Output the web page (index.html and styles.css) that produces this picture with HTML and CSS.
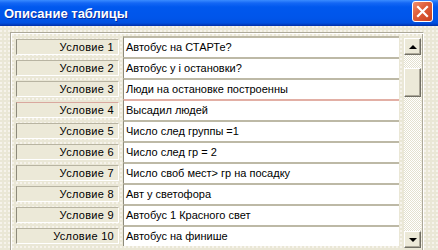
FILE: index.html
```html
<!DOCTYPE html>
<html>
<head>
<meta charset="utf-8">
<link rel="stylesheet" href="styles.css">
</head>
<body>
<div class="window">
  <div class="titlebar">
    <span class="title">Описание таблицы</span>
    <span class="close">
      <svg width="13" height="13" viewBox="0 0 13 13"><path d="M2 2 L11 11 M11 2 L2 11" stroke="#fff" stroke-width="2.2" stroke-linecap="square"/></svg>
    </span>
  </div>
  <div class="client">
    <div class="panel">
      <div class="rows">
        <div class="row"><div class="label">Условие 1</div><div class="value">Автобус на СТАРТе?</div></div>
        <div class="row"><div class="label">Условие 2</div><div class="value">Автобус у і остановки?</div></div>
        <div class="row"><div class="label">Условие 3</div><div class="value">Люди на остановке построенны</div></div>
        <div class="row focus"><div class="label">Условие 4</div><div class="value">Высадил людей</div></div>
        <div class="row"><div class="label">Условие 5</div><div class="value">Число след группы =1</div></div>
        <div class="row"><div class="label">Условие 6</div><div class="value">Число след гр = 2</div></div>
        <div class="row"><div class="label">Условие 7</div><div class="value">Число своб мест&gt; гр на посадку</div></div>
        <div class="row"><div class="label">Условие 8</div><div class="value">Авт у светофора</div></div>
        <div class="row"><div class="label">Условие 9</div><div class="value">Автобус 1 Красного свет</div></div>
        <div class="row"><div class="label">Условие 10</div><div class="value">Автобус на финише</div></div>
      </div>
      <div class="scrollbar">
        <div class="sbtn"><span class="tri up"></span></div>
        <div class="track"><div class="thumb"></div></div>
        <div class="sbtn"><span class="tri down"></span></div>
      </div>
    </div>
  </div>
</div>
</body>
</html>
```

FILE: styles.css
```css
html, body {
  margin: 0;
  padding: 0;
}
body {
  width: 438px;
  height: 250px;
  overflow: hidden;
  font-family: "Liberation Sans", Arial, sans-serif;
  font-size: 11px;
  color: #000;
  background: #ECE9D8;
}
.window {
  display: flex;
  flex-direction: column;
  width: 438px;
  height: 250px;
}
.titlebar {
  height: 26px;
  flex: none;
  display: flex;
  align-items: center;
  justify-content: space-between;
  padding: 0 5px 0 4px;
  box-sizing: border-box;
  background: linear-gradient(#3A8CFF 0, #1467F5 3px, #0058EE 7px, #0055EA 18px, #0050E0 23px, #0038B8 25px, #002FA8 26px);
}
.title {
  color: #fff;
  font-weight: bold;
  font-size: 13px;
  text-shadow: 1px 1px 0 #0A2A9C;
  margin-top: 1px;
}
.close {
  align-self: flex-start;
  margin-top: 1px;
  width: 21px;
  height: 21px;
  box-sizing: border-box;
  border: 1px solid #fff;
  border-radius: 3px;
  background: linear-gradient(135deg, #F09070 0%, #E0603C 40%, #C8401F 100%);
  display: flex;
  align-items: center;
  justify-content: center;
}
.close svg { display: block; }
.client {
  flex: 1;
  padding: 6px 14px 0 10px;
  background-color: #EAE7D6;
  background-image: radial-gradient(circle at 1px 1px, #F6F4EC 0.7px, transparent 1px);
  background-size: 4px 4px;
  min-height: 0;
}
.panel {
  display: flex;
  height: 230px;
  box-sizing: border-box;
  border-top: 1px solid #ACA899;
  border-left: 1px solid #ACA899;
  border-right: 1px solid #fff;
  box-shadow: inset 1px 1px 0 #fff, inset -1px 0 0 #ACA899;
  padding: 3px 2px 0 5px;
}
.rows {
  display: flex;
  flex-direction: column;
  width: 387px;
}
.row {
  display: flex;
  height: 21px;
  flex: none;
}
.label {
  width: 103px;
  height: 16px;
  margin-top: 3px;
  box-sizing: border-box;
  border-top: 1px solid #B8B4A2;
  border-left: 1px solid #8E8B7C;
  border-bottom: 1px solid #fff;
  border-right: 1px solid #fff;
  text-align: right;
  padding-right: 4px;
  line-height: 14px;
  letter-spacing: 0.3px;
  background: #ECE9D8;
}
.value {
  margin-left: 4px;
  width: 276px;
  height: 21px;
  box-sizing: border-box;
  border-top: 2px solid #BDB9A6;
  border-left: 1px solid #8E8B7C;
  background: #fff;
  padding-left: 2px;
  line-height: 19px;
  white-space: nowrap;
  overflow: hidden;
}
.row.focus .label { border-top-color: #D9A89E; }
.row.focus .value { border-top-color: #E2AFA5; }
.scrollbar {
  margin-left: 5px;
  margin-top: 2px;
  width: 17px;
  height: 210px;
  display: flex;
  flex-direction: column;
}
.sbtn, .thumb {
  box-sizing: border-box;
  background: #ECE9D8;
  border-top: 1px solid #fff;
  border-left: 1px solid #fff;
  border-right: 1px solid #716F64;
  border-bottom: 1px solid #716F64;
  box-shadow: inset -1px -1px 0 #ACA899;
}
.sbtn {
  height: 17px;
  flex: none;
  display: flex;
  align-items: center;
  justify-content: center;
}
.tri {
  width: 0;
  height: 0;
  border-left: 4px solid transparent;
  border-right: 4px solid transparent;
}
.tri.up { border-bottom: 4px solid #000; }
.tri.down { border-top: 4px solid #000; }
.track {
  flex: 1;
  background-color: #fff;
  background-image: repeating-conic-gradient(#E4E1CF 0 25%, #fff 0 50%);
  background-size: 2px 2px;
}
.thumb {
  margin-top: 13px;
  height: 29px;
}
```
